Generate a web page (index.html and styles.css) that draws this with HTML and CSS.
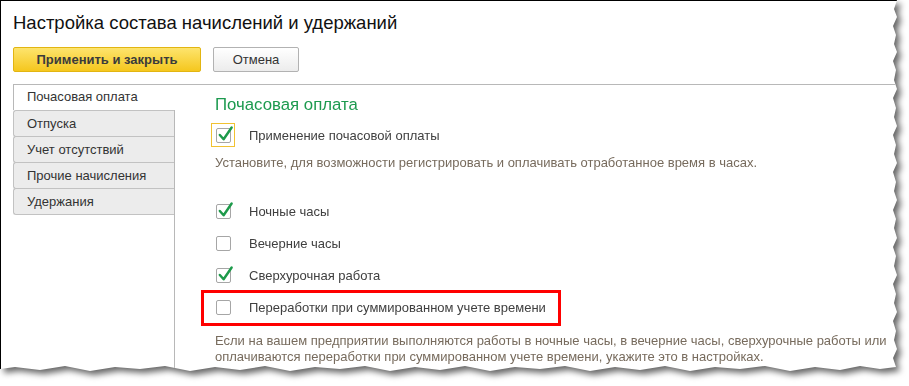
FILE: index.html
```html
<!DOCTYPE html>
<html lang="ru">
<head>
    <meta charset="UTF-8">
    <title>Настройка состава начислений и удержаний</title>
    <link rel="stylesheet" href="styles.css">
</head>
<body>
    <div class="paper">
        <div class="sheet">
            <h1 class="title">Настройка состава начислений и удержаний</h1>

            <div class="toolbar">
                <button class="btn btn-primary">Применить и закрыть</button>
                <button class="btn">Отмена</button>
            </div>

            <div class="tabs-area">
                <ul class="tab-list">
                    <li class="tab active">Почасовая оплата</li>
                    <li class="tab">Отпуска</li>
                    <li class="tab">Учет отсутствий</li>
                    <li class="tab">Прочие начисления</li>
                    <li class="tab">Удержания</li>
                </ul>

                <div class="tab-pane">
                    <h2 class="pane-title">Почасовая оплата</h2>

                    <label class="row row-main">
                        <span class="cb focus">
                            <span class="box checked">
                                <svg viewBox="0 0 18 18"><path d="M3 8.5 L7 13 L15.5 0.5"/></svg>
                            </span>
                        </span>
                        <span class="label">Применение почасовой оплаты</span>
                    </label>

                    <p class="hint">Установите, для возможности регистрировать и оплачивать отработанное время в часах.</p>

                    <div class="options">
                        <label class="row">
                            <span class="cb">
                                <span class="box checked">
                                    <svg viewBox="0 0 18 18"><path d="M3 8.5 L7 13 L15.5 0.5"/></svg>
                                </span>
                            </span>
                            <span class="label">Ночные часы</span>
                        </label>
                        <label class="row">
                            <span class="cb"><span class="box"></span></span>
                            <span class="label">Вечерние часы</span>
                        </label>
                        <label class="row">
                            <span class="cb">
                                <span class="box checked">
                                    <svg viewBox="0 0 18 18"><path d="M3 8.5 L7 13 L15.5 0.5"/></svg>
                                </span>
                            </span>
                            <span class="label">Сверхурочная работа</span>
                        </label>
                        <label class="row">
                            <span class="cb"><span class="box"></span></span>
                            <span class="label">Переработки при суммированном учете времени</span>
                        </label>
                    </div>

                    <p class="hint hint-bottom">Если на вашем предприятии выполняются работы в ночные часы, в вечерние часы, сверхурочные работы или<br>оплачиваются переработки при суммированном учете времени, укажите это в настройках.</p>

                    <!-- annotation frame -->
                    <div class="highlight"></div>
                </div>
            </div>
        </div>
    </div>
</body>
</html>
```

FILE: styles.css
```css
body, html {
    margin: 0;
    padding: 0;
    background: #fff;
}

body {
    font-family: "Liberation Sans", Arial, sans-serif;
    font-size: 13px;
    color: #333;
}

/* torn screenshot sheet */
.paper {
    width: 909px;
    height: 386px;
    filter: drop-shadow(4px 4px 3px rgba(0, 0, 0, 0.6));
}

.sheet {
    box-sizing: border-box;
    width: 899px;
    height: 372px;
    background: #fff;
    border-top: 1px solid #000;
    border-left: 1px solid #000;
    padding-left: 12px;
    display: flex;
    flex-direction: column;
    clip-path: polygon(0 0, 897px 0, 894px 9px, 897px 17px, 893px 26px, 896px 35px, 894px 44px, 897px 52px, 893px 61px, 896px 70px, 894px 80px, 897px 89px, 893px 98px, 896px 108px, 894px 117px, 897px 126px, 893px 135px, 896px 145px, 894px 154px, 897px 163px, 893px 172px, 896px 182px, 894px 191px, 897px 200px, 893px 210px, 896px 219px, 894px 228px, 897px 238px, 893px 247px, 896px 256px, 894px 266px, 897px 275px, 893px 284px, 896px 294px, 894px 303px, 897px 312px, 893px 321px, 896px 331px, 894px 340px, 897px 349px, 893px 358px, 896px 367px, 880px 369px, 860px 366px, 840px 370px, 815px 367px, 790px 371px, 765px 366px, 740px 369px, 715px 367px, 690px 371px, 665px 366px, 640px 370px, 615px 367px, 590px 371px, 565px 366px, 540px 369px, 515px 367px, 490px 371px, 465px 366px, 440px 370px, 415px 367px, 390px 371px, 365px 366px, 340px 369px, 315px 367px, 290px 371px, 265px 366px, 240px 370px, 215px 367px, 190px 371px, 165px 366px, 140px 369px, 115px 367px, 90px 371px, 65px 366px, 40px 370px, 15px 367px, 0 369px);
}

.title {
    margin: 11px 0 0;
    font-size: 18.5px;
    font-weight: normal;
    line-height: 21px;
    color: #111;
}

.toolbar {
    display: flex;
    gap: 12px;
    margin-top: 14px;
}

.btn {
    height: 25px;
    width: 86px;
    padding: 0;
    font-family: inherit;
    font-size: 13px;
    color: #333;
    background: linear-gradient(to bottom, #fff, #ececec);
    border: 1px solid #b2b2b2;
    border-radius: 2px;
}

.btn-primary {
    width: 188px;
    font-weight: bold;
    color: #3b3b3b;
    background: linear-gradient(to bottom, #fde46d, #f5c71e);
    border-color: #e2b512;
}

/* tabs */
.tabs-area {
    flex: 1;
    display: flex;
    margin-top: 12px;
    border-top: 1px solid #b8b8b8;
}

.tab-list {
    list-style: none;
    margin: 0;
    padding: 0;
    width: 161px;
    border-right: 1px solid #b8b8b8;
}

.tab {
    box-sizing: border-box;
    height: 27px;
    margin-top: -1px;
    padding-left: 13px;
    line-height: 25px;
    color: #333;
    background: #ececec;
    border: 1px solid #c2c2c2;
    border-right: none;
    border-radius: 3px 0 0 3px;
}

.tab.active {
    height: 25px;
    margin-top: 0;
    margin-right: -1px;
    line-height: 24px;
    background: #fff;
    border: none;
    border-left: 1px solid #b8b8b8;
    border-radius: 0;
}

.tab.active + .tab {
    margin-top: 0;
}

.tab-pane {
    position: relative;
    flex: 1;
    min-width: 0;
    padding: 10px 0 0 36px;
}

.pane-title {
    margin: 0 0 0 4px;
    font-size: 16.8px;
    font-weight: normal;
    line-height: 20px;
    color: #1d9a4f;
}

.row {
    display: flex;
    align-items: center;
    gap: 14px;
    height: 24px;
}

.row-main {
    margin-top: 8px;
}

.cb {
    box-sizing: border-box;
    width: 24px;
    height: 24px;
    display: flex;
    align-items: center;
    justify-content: center;
    border: 1px solid transparent;
}

.cb.focus {
    border-color: #f1c232;
}

.box {
    position: relative;
    box-sizing: border-box;
    width: 15px;
    height: 15px;
    border: 1px solid #a6a6a6;
    border-radius: 2px;
    background: #fff;
}

.box svg {
    position: absolute;
    left: 0;
    top: -2px;
    width: 17px;
    height: 17px;
    overflow: visible;
}

.box svg path {
    fill: none;
    stroke: #1d9a4a;
    stroke-width: 2.6;
    stroke-linecap: round;
    stroke-linejoin: round;
}

.label {
    color: #404040;
}

.hint {
    margin: 8px 0 0 4px;
    line-height: 16px;
    color: #776b5d;
}

.options {
    display: flex;
    flex-direction: column;
    gap: 8px;
    margin-top: 28px;
}

.hint-bottom {
    margin-top: 14px;
    white-space: nowrap;
}

.highlight {
    position: absolute;
    left: 26px;
    top: 205px;
    width: 360px;
    height: 36px;
    box-sizing: border-box;
    border: 3px solid #ff0000;
}
```
